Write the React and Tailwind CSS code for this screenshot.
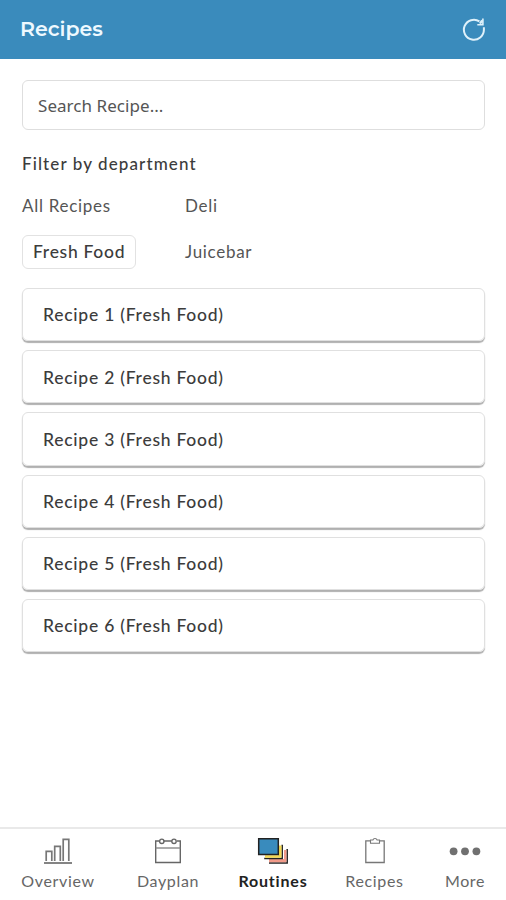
import { useState } from 'react';

const departments = ['All Recipes', 'Deli', 'Fresh Food', 'Juicebar'];
const recipeNumbers = [1, 2, 3, 4, 5, 6];

function RefreshIcon() {
  return (
    <svg width="24" height="26" viewBox="0 0 24 26" fill="none" stroke="#dff1fa" strokeWidth="2">
      <path d="M21.9 11.2v2.6A10 10 0 1 1 17.4 5.4" />
      <path d="M20.9 2.4v6.4h-5.6" strokeWidth="1.6" />
      <path d="M20.2 4.4l-2.2 3.2" strokeWidth="2.4" />
    </svg>
  );
}

function OverviewIcon() {
  return (
    <svg width="30" height="28" viewBox="0 0 30 28" fill="none" stroke="#777777" strokeWidth="1.7">
      <path d="M3.2 24V14.3h5.6V24M11.7 24V9.3h5.6V24M20.2 24V2.3h5.6V24" />
      <path d="M1 26h28" strokeWidth="1.8" />
    </svg>
  );
}

function DayplanIcon() {
  return (
    <svg width="30" height="28" viewBox="0 0 30 28" fill="none" stroke="#666666" strokeWidth="1.4">
      <path d="M6 4H2.7v21.5h24.6V4H24M10.5 4h8.3" />
      <path d="M2.7 11h24.6" stroke="#888888" />
      <circle cx="8.8" cy="4.3" r="2.2" />
      <circle cx="21" cy="4.3" r="2.2" />
    </svg>
  );
}

function RoutinesIcon() {
  return (
    <svg width="32" height="28" viewBox="0 0 32 28" stroke="#222222" strokeWidth="1.5">
      <path d="M12 26h18.2V12" fill="none" />
      <path d="M12 22h15v-9h2.4v12.2H12z" fill="#f29b8a" stroke="none" />
      <path d="M7.2 21.5h18V7.8" fill="none" />
      <path d="M8 18.3h13.5V8.5h3v12.2H8z" fill="#f5d94f" stroke="none" />
      <path d="M1.7 1.7h19.6v15.8H1.7z" fill="#398bbd" />
    </svg>
  );
}

function ClipboardIcon() {
  return (
    <svg width="30" height="28" viewBox="0 0 30 28" fill="none" stroke="#777777" strokeWidth="1.3">
      <path d="M10.5 3.8H5.8v21.7h18.4V3.8h-4.7" />
      <path d="M10.5 3v3.2h9V3h-2.4a2.2 2.2 0 0 0-4.2 0z" strokeWidth="1.1" />
    </svg>
  );
}

function MoreIcon() {
  return (
    <svg width="32" height="28" viewBox="0 0 32 28" fill="#707070">
      <circle cx="4.6" cy="14.3" r="3.9" />
      <circle cx="16" cy="14.3" r="3.9" />
      <circle cx="27.4" cy="14.3" r="3.9" />
    </svg>
  );
}

const tabs = [
  { name: 'Overview', icon: OverviewIcon },
  { name: 'Dayplan', icon: DayplanIcon },
  { name: 'Routines', icon: RoutinesIcon },
  { name: 'Recipes', icon: ClipboardIcon },
  { name: 'More', icon: MoreIcon },
];

export default function App() {
  const [search, setSearch] = useState('');
  const [department, setDepartment] = useState('Fresh Food');
  const [activeTab, setActiveTab] = useState('Routines');

  const recipes = recipeNumbers
    .map((n) => `Recipe ${n} (${department})`)
    .filter((name) => name.toLowerCase().includes(search.toLowerCase()));

  return (
    <div className="flex h-screen flex-col bg-white font-['Lato',sans-serif] text-[#3c3c3c]">
      <header className="flex h-[59px] shrink-0 items-center justify-between bg-[#3a8bbc] px-5 pb-0.5">
        <h1 className="font-['Montserrat','Inter',sans-serif] text-[20.5px] leading-6 font-semibold text-[#eef9ff]">
          Recipes
        </h1>
        <button aria-label="Refresh">
          <RefreshIcon />
        </button>
      </header>

      <main className="flex-1 pt-[21px] pr-[21px] pl-[22px]">
        <input
          value={search}
          onChange={(e) => setSearch(e.target.value)}
          placeholder="Search Recipe..."
          className="block h-[50px] w-full rounded-md border border-[#dedede] px-[15px] font-['Noto_Sans',sans-serif] text-[17px] tracking-[0.05px] outline-none placeholder:text-[#555555]"
        />

        <h2 className="mt-[22px] text-[17px] leading-6 font-medium tracking-[1.1px]">Filter by department</h2>

        <div className="mt-[13px] grid grid-cols-[163px_1fr] gap-y-3">
          {departments.map((dept) => (
            <div key={dept} className="flex h-[34px] items-center">
              <button
                onClick={() => setDepartment(dept)}
                className={
                  dept === department
                    ? 'h-[34px] rounded-md border border-[#e2e2e2] px-[10px] text-[17.5px] font-medium tracking-[0.7px]'
                    : 'text-[17px] tracking-[0.7px] text-[#555555]'
                }
              >
                {dept}
              </button>
            </div>
          ))}
        </div>

        <ul className="mt-[19px] space-y-[9px]">
          {recipes.map((name) => (
            <li
              key={name}
              className="flex h-[53.2px] items-center rounded-md border border-[#e0e0e0] pt-0.5 pl-5 text-[17.5px] font-medium tracking-[0.75px] shadow-[0_2px_1px_#b0b0b0]"
            >
              {name}
            </li>
          ))}
        </ul>
      </main>

      <nav className="grid h-[73px] shrink-0 grid-cols-[115px_105px_105px_98px_83px] border-t-2 border-[#e9e9e9]">
        {tabs.map(({ name, icon: Icon }) => (
          <button
            key={name}
            onClick={() => setActiveTab(name)}
            className={
              name === activeTab
                ? 'flex flex-col items-center pt-2 pl-px text-[16px] font-bold tracking-[0.8px] text-[#222222]'
                : 'flex flex-col items-center pt-2 pl-px text-[16px] tracking-[0.65px] text-[#666666]'
            }
          >
            <Icon />
            <span className="mt-1 leading-6">{name}</span>
          </button>
        ))}
      </nav>
    </div>
  );
}
